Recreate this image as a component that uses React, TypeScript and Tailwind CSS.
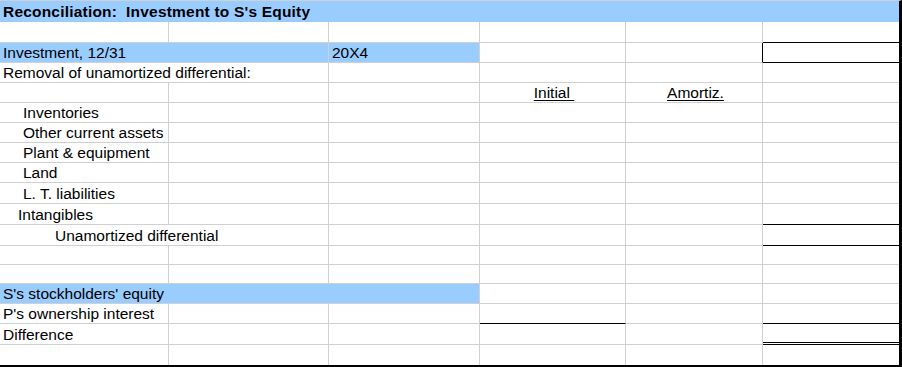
import React from "react";

const base =
  "flex items-end h-full whitespace-nowrap overflow-visible border-b border-r border-[#d0d0d0] pl-[3px] pb-[1px] leading-[17px]";

function Cell({
  className = "",
  children,
}: {
  className?: string;
  children?: React.ReactNode;
}) {
  return <div className={`${base} ${className}`}>{children}</div>;
}

function Row({ h, children }: { h: string; children: React.ReactNode }) {
  return <div className={`flex ${h}`}>{children}</div>;
}

function Blank({
  h,
  c6 = "",
  c4 = "",
  c5 = "",
}: {
  h: string;
  c6?: string;
  c4?: string;
  c5?: string;
}) {
  return (
    <Row h={h}>
      <Cell className="w-[169px]" />
      <Cell className="w-[160px]" />
      <Cell className="w-[151px]" />
      <Cell className={`w-[146px] ${c4}`} />
      <Cell className={`w-[137px] ${c5}`} />
      <Cell className={`w-[136px] border-r-0 ${c6}`} />
    </Row>
  );
}

function Label({
  h,
  text,
  pad,
  c6 = "",
  c4 = "",
  merged = false,
}: {
  h: string;
  text: string;
  pad: string;
  c6?: string;
  c4?: string;
  merged?: boolean;
}) {
  return (
    <Row h={h}>
      {merged ? (
        <Cell className={`w-[329px] ${pad}`}>{text}</Cell>
      ) : (
        <>
          <Cell className={`w-[169px] ${pad}`}>{text}</Cell>
          <Cell className="w-[160px]" />
        </>
      )}
      <Cell className="w-[151px]" />
      <Cell className={`w-[146px] ${c4}`} />
      <Cell className="w-[137px]" />
      <Cell className={`w-[136px] border-r-0 ${c6}`} />
    </Row>
  );
}

export default function App() {
  return (
    <div
      className="w-[902px] bg-white text-black text-[15.5px] border-t border-t-[#d0d0d0] border-r-[3px] border-r-black border-b-[2px] border-b-black"
      style={{ fontFamily: '"Liberation Sans", Arial, sans-serif' }}
    >
      {/* Title */}
      <div className="flex items-end h-[21px] bg-[#99ccff] pl-[3px] pb-[2px] leading-[17px] font-bold tracking-[0.2px] whitespace-nowrap">
        Reconciliation:&nbsp; Investment to S's Equity
      </div>

      <Blank h="h-[21px]" c6="border-b-black" />

      {/* Investment row */}
      <Row h="h-[20px]">
        <Cell className="w-[329px] bg-[#99ccff] border-[#99ccff]">
          Investment, 12/31
        </Cell>
        <Cell className="w-[151px] bg-[#99ccff] border-[#99ccff]">20X4</Cell>
        <Cell className="w-[146px]" />
        <Cell className="w-[137px] border-r-black" />
        <Cell className="w-[136px] border-r-0 border-b-black" />
      </Row>

      <Label
        h="h-[20px]"
        text="Removal of unamortized differential:"
        pad="pl-[3px]"
        merged
      />

      {/* Initial / Amortiz */}
      <Row h="h-[20px]">
        <Cell className="w-[169px]" />
        <Cell className="w-[160px]" />
        <Cell className="w-[151px]" />
        <Cell className="w-[146px] justify-center pl-0">
          <span className="underline underline-offset-[2px]">Initial&nbsp;</span>
        </Cell>
        <Cell className="w-[137px] justify-center pl-0">
          <span className="underline underline-offset-[2px]">Amortiz.</span>
        </Cell>
        <Cell className="w-[136px] border-r-0" />
      </Row>

      <Label h="h-[20px]" text="Inventories" pad="pl-[23px]" />
      <Label h="h-[20px]" text="Other current assets" pad="pl-[23px]" />
      <Label h="h-[20px]" text="Plant & equipment" pad="pl-[23px]" />
      <Label h="h-[20px]" text="Land" pad="pl-[23px]" />
      <Label h="h-[21px]" text="L. T. liabilities" pad="pl-[23px]" />
      <Label
        h="h-[21px]"
        text="Intangibles"
        pad="pl-[18px]"
        c6="border-b-black"
      />
      <Label
        h="h-[21px]"
        text="Unamortized differential"
        pad="pl-[55px]"
        c6="border-b-black"
        merged
      />

      <Blank h="h-[19px]" />
      <Blank h="h-[19px]" />

      {/* S's stockholders' equity */}
      <Row h="h-[20px]">
        <Cell className="w-[480px] bg-[#99ccff] border-[#99ccff]">
          S's stockholders' equity
        </Cell>
        <Cell className="w-[146px]" />
        <Cell className="w-[137px]" />
        <Cell className="w-[136px] border-r-0" />
      </Row>

      <Label
        h="h-[20px]"
        text="P's ownership interest"
        pad="pl-[3px]"
        c4="border-b-black"
        c6="border-b-black"
      />
      <Label
        h="h-[21px]"
        text="Difference"
        pad="pl-[3px]"
        c6="border-b-[3px] border-double border-b-black"
      />
      <Row h="h-[20px]">
        <Cell className="w-[169px] border-b-0" />
        <Cell className="w-[160px] border-b-0" />
        <Cell className="w-[151px] border-b-0" />
        <Cell className="w-[146px] border-b-0" />
        <Cell className="w-[137px] border-b-0" />
        <Cell className="w-[136px] border-r-0 border-b-0" />
      </Row>
    </div>
  );
}
